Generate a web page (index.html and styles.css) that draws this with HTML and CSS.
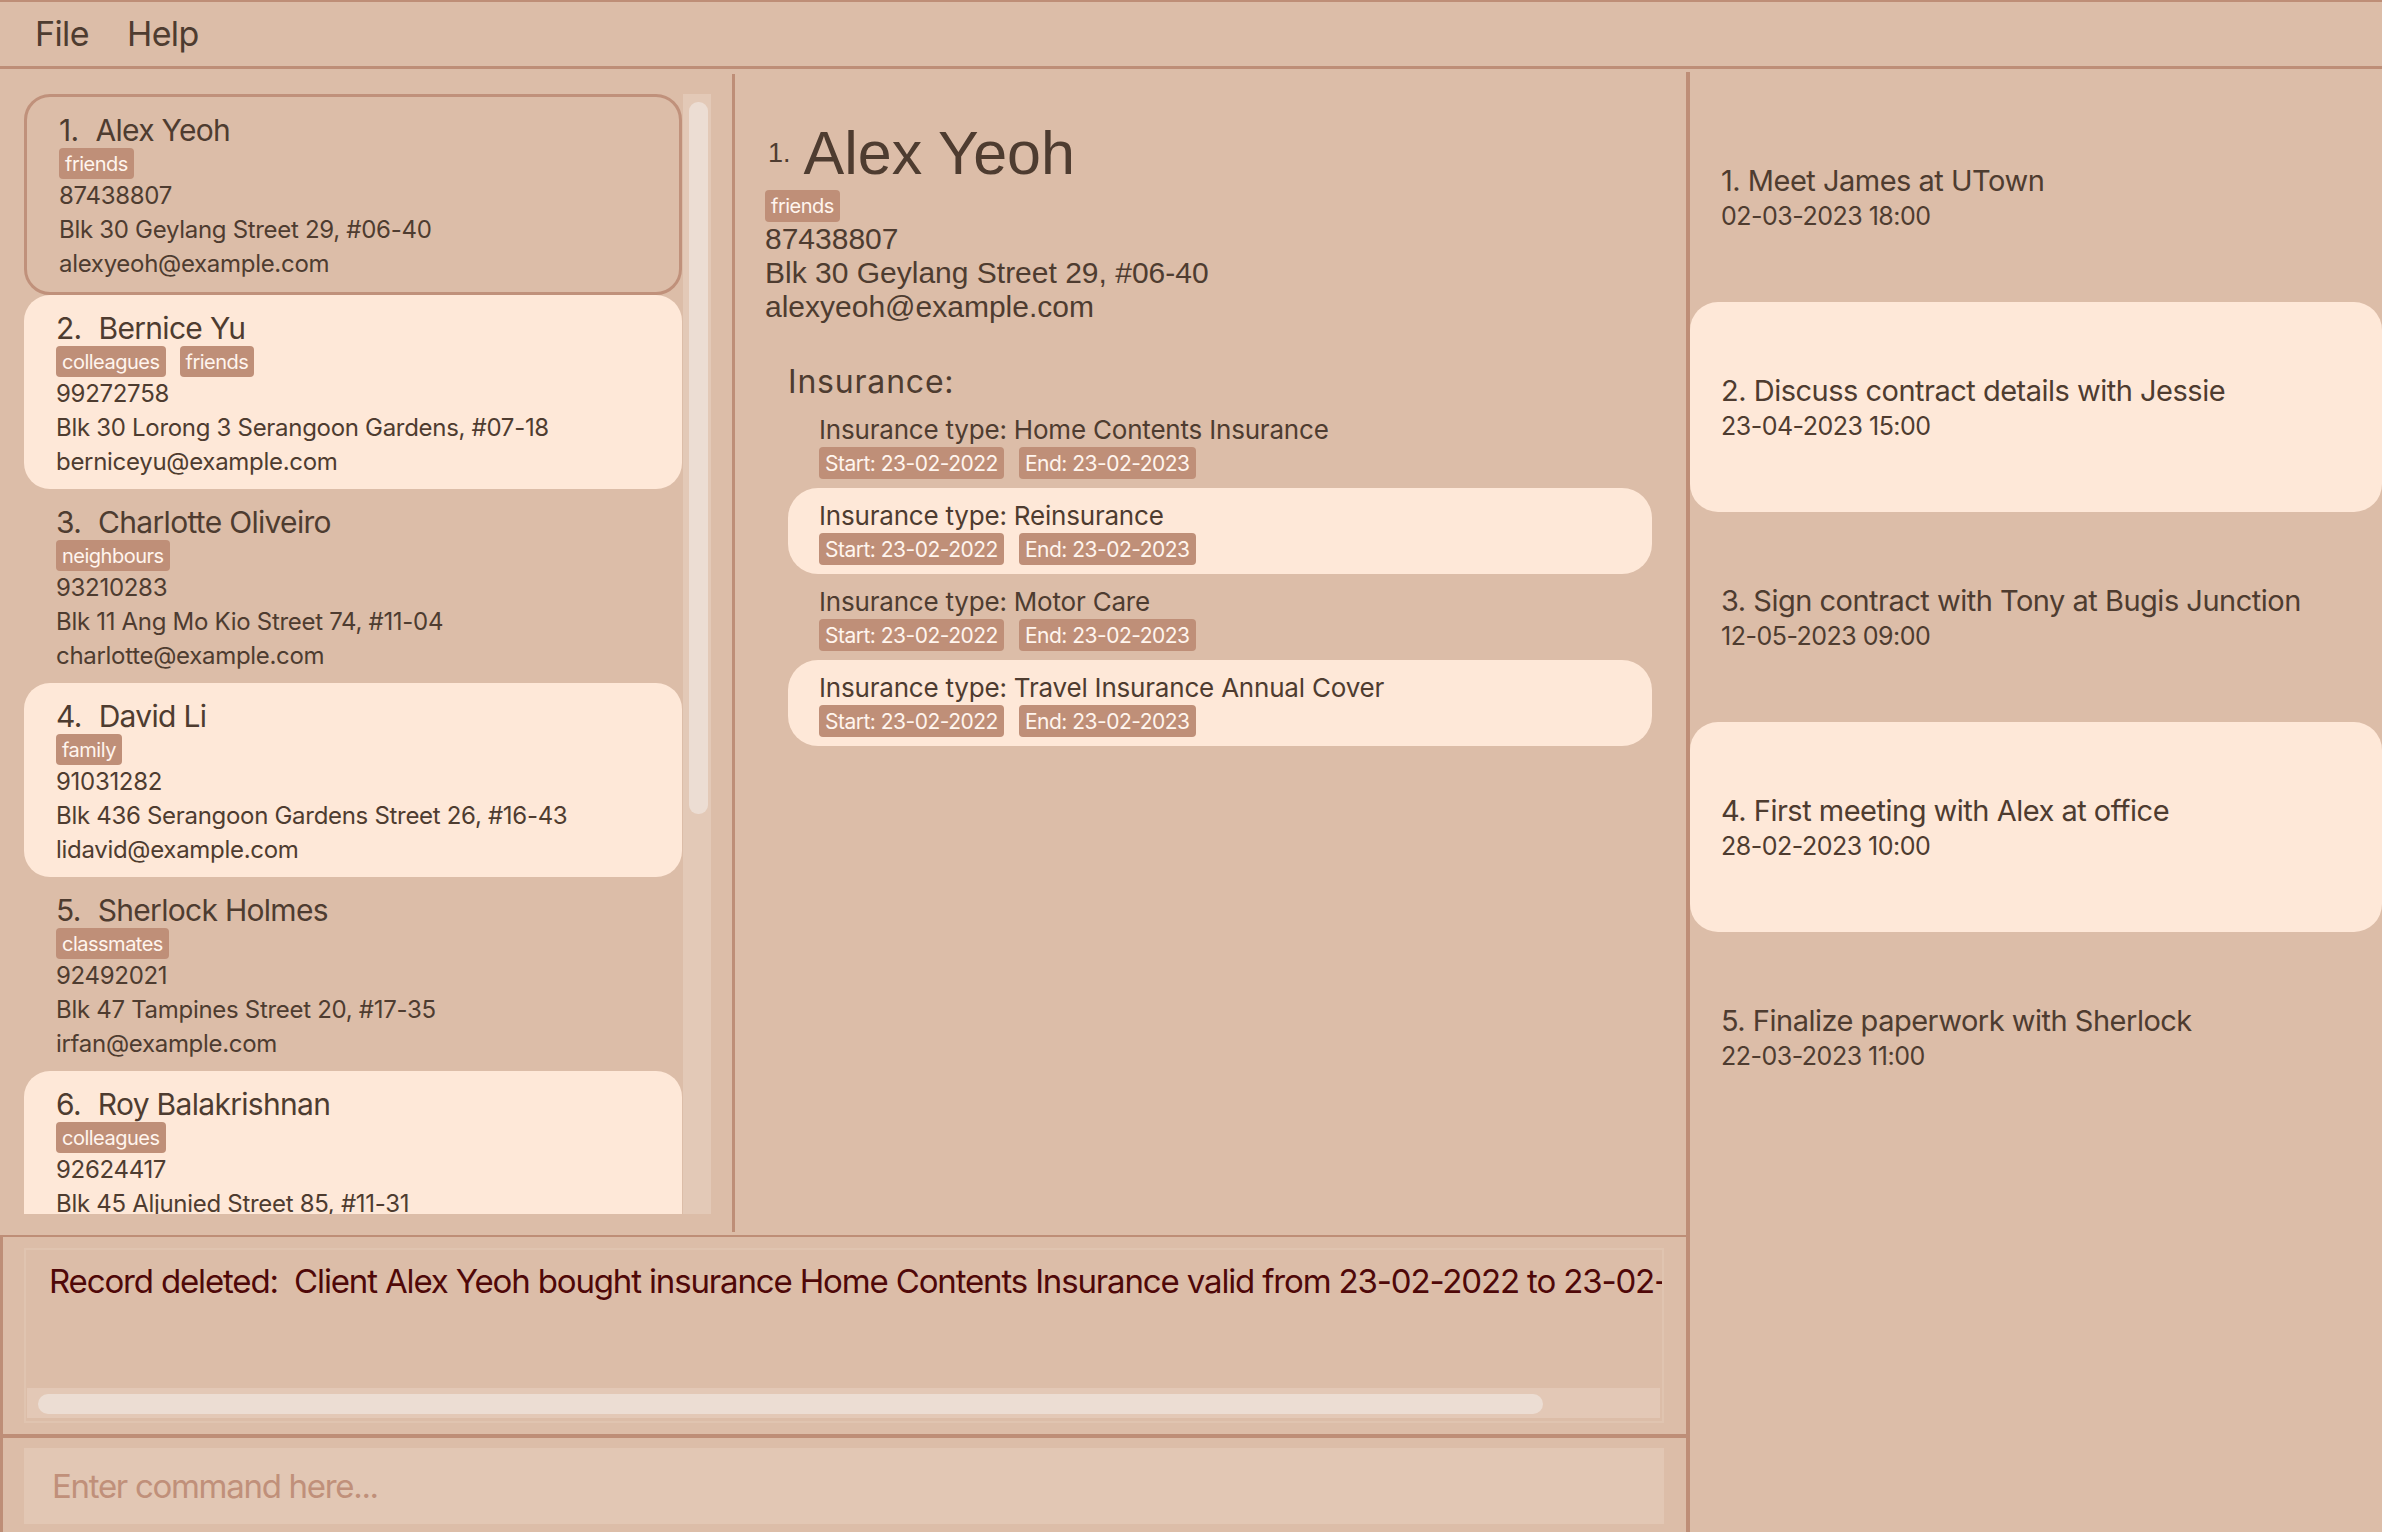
FILE: index.html
```html
<!DOCTYPE html>
<html>
<head>
<meta charset="utf-8">
<link rel="stylesheet" href="styles.css">
</head>
<body>
<div class="app">
  <div class="menubar">
    <span class="menu-item">File</span>
    <span class="menu-item">Help</span>
  </div>
  <div class="main">
    <div class="left-col">
      <div class="top-row">
        <div class="list-panel">
          <div class="person-list">
            <div class="card selected">
              <div class="card-name"><span class="idx">1.</span><span>Alex Yeoh</span></div>
              <div class="tags"><span class="tag">friends</span></div>
              <div class="line">87438807</div>
              <div class="line">Blk 30 Geylang Street 29, #06-40</div>
              <div class="line">alexyeoh@example.com</div>
            </div>
            <div class="card alt">
              <div class="card-name"><span class="idx">2.</span><span>Bernice Yu</span></div>
              <div class="tags"><span class="tag">colleagues</span><span class="tag">friends</span></div>
              <div class="line">99272758</div>
              <div class="line">Blk 30 Lorong 3 Serangoon Gardens, #07-18</div>
              <div class="line">berniceyu@example.com</div>
            </div>
            <div class="card">
              <div class="card-name"><span class="idx">3.</span><span>Charlotte Oliveiro</span></div>
              <div class="tags"><span class="tag">neighbours</span></div>
              <div class="line">93210283</div>
              <div class="line">Blk 11 Ang Mo Kio Street 74, #11-04</div>
              <div class="line">charlotte@example.com</div>
            </div>
            <div class="card alt">
              <div class="card-name"><span class="idx">4.</span><span>David Li</span></div>
              <div class="tags"><span class="tag">family</span></div>
              <div class="line">91031282</div>
              <div class="line">Blk 436 Serangoon Gardens Street 26, #16-43</div>
              <div class="line">lidavid@example.com</div>
            </div>
            <div class="card">
              <div class="card-name"><span class="idx">5.</span><span>Sherlock Holmes</span></div>
              <div class="tags"><span class="tag">classmates</span></div>
              <div class="line">92492021</div>
              <div class="line">Blk 47 Tampines Street 20, #17-35</div>
              <div class="line">irfan@example.com</div>
            </div>
            <div class="card alt">
              <div class="card-name"><span class="idx">6.</span><span>Roy Balakrishnan</span></div>
              <div class="tags"><span class="tag">colleagues</span></div>
              <div class="line">92624417</div>
              <div class="line">Blk 45 Aljunied Street 85, #11-31</div>
              <div class="line">royb@example.com</div>
            </div>
          </div>
          <div class="vtrack"><div class="vthumb"></div></div>
        </div>
        <div class="detail-panel">
          <div class="detail-head"><span class="detail-idx">1.</span><span class="detail-name">Alex Yeoh</span></div>
          <div class="detail-tags"><span class="tag dtag">friends</span></div>
          <div class="detail-line">87438807</div>
          <div class="detail-line">Blk 30 Geylang Street 29, #06-40</div>
          <div class="detail-line">alexyeoh@example.com</div>
          <div class="ins-heading">Insurance:</div>
          <div class="ins-list">
            <div class="ins-item">
              <div class="ins-type">Insurance type: Home Contents Insurance</div>
              <div class="ins-dates"><span class="tag date">Start: 23-02-2022</span><span class="tag date">End: 23-02-2023</span></div>
            </div>
            <div class="ins-item alt">
              <div class="ins-type">Insurance type: Reinsurance</div>
              <div class="ins-dates"><span class="tag date">Start: 23-02-2022</span><span class="tag date">End: 23-02-2023</span></div>
            </div>
            <div class="ins-item">
              <div class="ins-type">Insurance type: Motor Care</div>
              <div class="ins-dates"><span class="tag date">Start: 23-02-2022</span><span class="tag date">End: 23-02-2023</span></div>
            </div>
            <div class="ins-item alt">
              <div class="ins-type">Insurance type: Travel Insurance Annual Cover</div>
              <div class="ins-dates"><span class="tag date">Start: 23-02-2022</span><span class="tag date">End: 23-02-2023</span></div>
            </div>
          </div>
        </div>
      </div>
      <div class="result">
        <div class="result-box">
          <div class="result-text">Record deleted:&nbsp; Client Alex Yeoh bought insurance Home Contents Insurance valid from 23-02-2022 to 23-02-2023</div>
          <div class="htrack"><div class="hthumb"></div></div>
        </div>
      </div>
      <div class="command">
        <div class="command-box">Enter command here...</div>
      </div>
    </div>
    <div class="events">
      <div class="event">
        <div class="event-title">1. Meet James at UTown</div>
        <div class="event-date">02-03-2023 18:00</div>
      </div>
      <div class="event alt">
        <div class="event-title">2. Discuss contract details with Jessie</div>
        <div class="event-date">23-04-2023 15:00</div>
      </div>
      <div class="event">
        <div class="event-title">3. Sign contract with Tony at Bugis Junction</div>
        <div class="event-date">12-05-2023 09:00</div>
      </div>
      <div class="event alt">
        <div class="event-title">4. First meeting with Alex at office</div>
        <div class="event-date">28-02-2023 10:00</div>
      </div>
      <div class="event">
        <div class="event-title">5. Finalize paperwork with Sherlock</div>
        <div class="event-date">22-03-2023 11:00</div>
      </div>
    </div>
  </div>
</div>
</body>
</html>
```

FILE: styles.css
```css
* { box-sizing: border-box; margin: 0; padding: 0; }
html, body { width: 2382px; height: 1532px; overflow: hidden; }
body {
  background: #dcbda8;
  font-family: Inter, "Noto Sans", sans-serif;
  color: #4e3c30;
}
.app { display: flex; flex-direction: column; height: 1532px; }

.menubar {
  height: 69px;
  border-top: 2px solid #be8e77;
  border-bottom: 3px solid #be8e77;
  display: flex;
  align-items: center;
  padding-left: 35px;
  padding-bottom: 2px;
  gap: 38px;
  font-size: 34px;
  letter-spacing: -0.6px;
}

.main { display: flex; height: 1463px; }
.left-col { width: 1686px; display: flex; flex-direction: column; }

.top-row {
  height: 1168px;
  display: flex;
  border-bottom: 2px solid #be8e77;
}

.list-panel {
  width: 735px;
  margin: 5px 0 3px 0;
  border-right: 3px solid #be8e77;
  display: flex;
  padding: 20px 0 0 24px;
}
.person-list {
  width: 658px;
  height: 1120px;
  overflow: hidden;
}
.vtrack {
  margin-left: 1px;
  width: 28px;
  height: 1120px;
  background: #e3c9b7;
  padding: 8px 3px 0 6px;
}
.vthumb {
  width: 19px;
  height: 712px;
  background: #ecddd3;
  border-radius: 9px;
}

.card {
  height: 194px;
  border-radius: 26px;
  padding: 15px 32px 0 32px;
}
.card.alt { background: #fee8d8; }
.card.selected {
  height: 201px;
  border: 3px solid #c0917b;
  padding-top: 15px;
  padding-left: 32px;
}
.card-name {
  display: flex;
  gap: 17px;
  font-size: 30px;
  line-height: 36px;
  letter-spacing: -0.7px;
}
.tags {
  display: flex;
  gap: 14px;
  margin-top: 0;
}
.tag {
  display: inline-flex;
  align-items: center;
  height: 31px;
  padding: 0 6px;
  background: #bf8f78;
  color: #fff5ee;
  border-radius: 4px;
  font-size: 20px;
  letter-spacing: -0.5px;
}
.line {
  font-size: 24px;
  line-height: 34px;
  letter-spacing: -0.3px;
}

.detail-panel {
  flex: 1;
  padding: 49px 34px 0 30px;
}
.detail-head {
  display: flex;
  align-items: center;
  height: 70px;
}
.detail-idx {
  font-family: "Liberation Sans", Arial, sans-serif;
  font-size: 27px;
  margin-left: 3px;
  margin-right: 13px;
}
.detail-name {
  font-family: "Liberation Sans", Arial, sans-serif;
  font-size: 61px;
  line-height: 70px;
}
.detail-tags { margin-top: 2px; display: flex; }
.dtag { height: 32px; }
.detail-line {
  font-family: "Liberation Sans", Arial, sans-serif;
  font-size: 30px;
  line-height: 34px;
}
.ins-heading {
  margin: 38px 0 0 23px;
  font-size: 32px;
  line-height: 40px;
  letter-spacing: 0.8px;
}
.ins-list { margin-left: 23px; }
.ins-item {
  height: 86px;
  border-radius: 30px;
  padding: 12px 31px 0 31px;
}
.ins-item.alt { background: #fee8d8; }
.ins-type {
  font-size: 26px;
  line-height: 32px;
  letter-spacing: -0.2px;
}
.ins-dates {
  display: flex;
  gap: 15px;
  margin-top: 1px;
}
.tag.date {
  height: 32px;
  font-size: 21px;
  letter-spacing: -0.5px;
  padding: 0 6px;
}

.result {
  height: 201px;
  border-left: 3px solid #be8e77;
  border-bottom: 4px solid #be8e77;
  padding: 11px 22px 0 21px;
}
.result-box {
  height: 175px;
  border: 2px solid #e0c4b0;
  display: flex;
  flex-direction: column;
  overflow: hidden;
}
.result-text {
  flex: 1;
  padding: 11px 0 0 23px;
  white-space: nowrap;
  overflow: hidden;
  font-size: 33px;
  line-height: 40px;
  letter-spacing: -1.15px;
  color: #4f0808;
}
.htrack {
  height: 30px;
  margin: 0 2px 3px 1px;
  background: #e3c8b6;
  padding: 6px 0 0 11px;
}
.hthumb {
  width: 1505px;
  height: 20px;
  background: #ecddd3;
  border-radius: 10px;
}

.command {
  height: 94px;
  border-left: 3px solid #be8e77;
  padding: 10px 22px 0 21px;
}
.command-box {
  height: 76px;
  background: #e2c7b4;
  padding-left: 28px;
  font-size: 33px;
  line-height: 76px;
  letter-spacing: -1.3px;
  color: #c0907a;
}

.events {
  width: 696px;
  margin-top: 3px;
  border-left: 4px solid #be8e77;
  padding-top: 20px;
}
.event {
  height: 210px;
  border-radius: 28px;
  padding: 71px 0 0 31px;
}
.event.alt { background: #fee8d8; }
.event-title {
  font-size: 29px;
  line-height: 36px;
  letter-spacing: -0.5px;
}
.event-date {
  font-size: 25px;
  line-height: 34px;
  letter-spacing: -0.5px;
}
```
